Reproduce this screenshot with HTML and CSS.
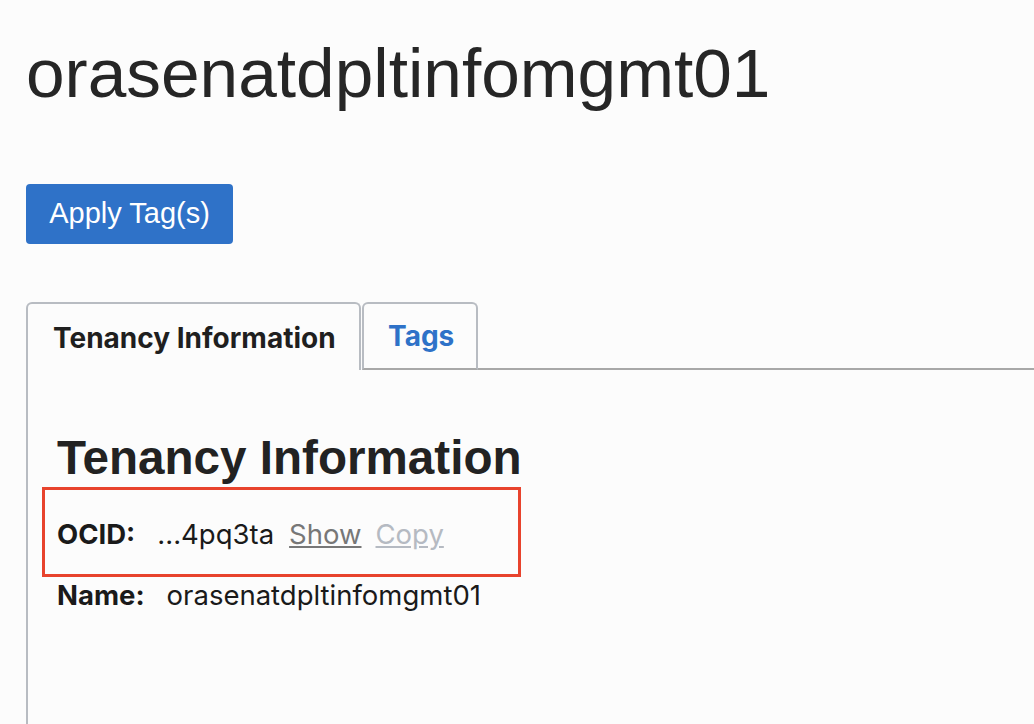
FILE: index.html
```html
<!DOCTYPE html>
<html lang="en">
<head>
<meta charset="utf-8">
<title>orasenatdpltinfomgmt01</title>
<link rel="stylesheet" href="styles.css">
</head>
<body>
<div class="page">
  <h1 class="title">orasenatdpltinfomgmt01</h1>
  <button class="btn-primary" type="button">Apply Tag(s)</button>
  <div class="tabs">
    <div class="tab-bar">
      <div class="tab tab-active">Tenancy Information</div>
      <div class="tab tab-link">Tags</div>
      <div class="tab-rest"></div>
    </div>
    <div class="tab-panel">
      <h2 class="section-title">Tenancy Information</h2>
      <div class="highlight">
        <div class="info-row">
          <span class="info-label">OCID:</span>
          <span class="info-value">...4pq3ta</span>
          <a class="link-show">Show</a>
          <a class="link-copy">Copy</a>
        </div>
      </div>
      <div class="info-row info-row-name">
        <span class="info-label">Name:</span>
        <span class="info-value">orasenatdpltinfomgmt01</span>
      </div>
    </div>
  </div>
</div>
</body>
</html>
```

FILE: styles.css
```css
html, body {
  margin: 0;
  padding: 0;
  background: #fcfcfc;
  height: 100%;
  overflow: hidden;
}

.page {
  box-sizing: border-box;
  height: 100%;
  display: flex;
  flex-direction: column;
  align-items: flex-start;
  padding: 33px 0 0 26px;
  font-family: "Liberation Sans", Arial, sans-serif;
  color: #222;
}

.title {
  margin: 0;
  font-size: 69.4px;
  font-weight: 400;
  line-height: 80px;
  color: #262626;
}

.btn-primary {
  display: block;
  margin-top: 71px;
  width: 207px;
  height: 60px;
  border: none;
  border-radius: 4px;
  background: #2f72c8;
  color: #fff;
  font-family: "Liberation Sans", Arial, sans-serif;
  font-size: 29px;
  padding: 0 0 2px 0;
}

.tabs {
  margin-top: 58px;
  align-self: stretch;
  flex: 1;
  display: flex;
  flex-direction: column;
}

.tab-bar {
  display: flex;
  align-items: flex-end;
  height: 68px;
}

.tab {
  box-sizing: border-box;
  height: 68px;
  border: 2px solid #b8bcc2;
  border-radius: 6px 6px 0 0;
  padding: 0 24px;
  display: flex;
  align-items: center;
  white-space: nowrap;
  font-family: Inter, "Liberation Sans", sans-serif;
  font-weight: 700;
  font-size: 28px;
  background: #fcfcfc;
}

.tab-active {
  border-bottom: none;
  color: #1f1f1f;
  width: 335px;
  padding: 2px 0 0 25px;
}

.tab-link {
  margin-left: 1px;
  color: #2e72c8;
  width: 116px;
  border-bottom-color: #a8a8a8;
}

.tab-rest {
  flex: 1;
  height: 0;
  border-bottom: 2px solid #a8a8a8;
}

.tab-panel {
  flex: 1;
  border-left: 2px solid #b8bcc2;
  padding: 59px 0 0 29px;
}

.section-title {
  margin: 0;
  font-size: 47.6px;
  font-weight: 700;
  line-height: 58px;
  color: #222;
}

.highlight {
  box-sizing: border-box;
  margin: 0 0 0 -15px;
  width: 479px;
  height: 90px;
  border: 3px solid #e8432d;
  display: flex;
  align-items: center;
  padding: 4px 0 0 12px;
}

.info-row {
  display: flex;
  align-items: baseline;
  font-family: Inter, "Liberation Sans", sans-serif;
  font-size: 27.5px;
  color: #1a1a1a;
}

.info-label {
  font-weight: 700;
  margin-right: 22px;
}

.link-show {
  margin-left: 15px;
  color: #777;
  text-decoration: underline;
}

.link-copy {
  margin-left: 14px;
  color: #b5bac2;
  text-decoration: underline;
}

.info-row-name {
  margin-top: 1px;
}
```
